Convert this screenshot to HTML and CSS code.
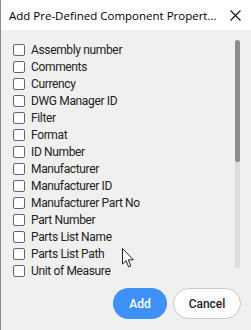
FILE: index.html
```html
<!DOCTYPE html>
<html lang="en">
<head>
  <meta charset="UTF-8">
  <title>Add Pre-Defined Component Properties</title>
  <link rel="stylesheet" href="styles.css">
</head>
<body>
  <div class="ventana">
    <div class="barra-titulo">
      <span class="titulo">Add Pre-Defined Component Propert...</span>
      <svg class="cerrar" width="11" height="11" viewBox="0 0 11 11">
        <path d="M0.5 0.5 L10.5 10.5 M10.5 0.5 L0.5 10.5" stroke="#111" stroke-width="1.1" fill="none"/>
      </svg>
    </div>

    <div class="contenido">
      <ul class="lista">
        <li><span class="caja"></span>Assembly number</li>
        <li><span class="caja"></span>Comments</li>
        <li><span class="caja"></span>Currency</li>
        <li><span class="caja"></span>DWG Manager ID</li>
        <li><span class="caja"></span>Filter</li>
        <li><span class="caja"></span>Format</li>
        <li><span class="caja"></span>ID Number</li>
        <li><span class="caja"></span>Manufacturer</li>
        <li><span class="caja"></span>Manufacturer ID</li>
        <li><span class="caja"></span>Manufacturer Part No</li>
        <li><span class="caja"></span>Part Number</li>
        <li><span class="caja"></span>Parts List Name</li>
        <li><span class="caja"></span>Parts List Path</li>
        <li><span class="caja"></span>Unit of Measure</li>
      </ul>
      <div class="scroll">
        <div class="scroll-thumb"></div>
      </div>
    </div>

    <div class="botones">
      <button class="btn-add">Add</button>
      <button class="btn-cancel">Cancel</button>
    </div>

    <!-- puntero del raton -->
    <svg class="cursor" width="13" height="21" viewBox="0 0 13 21">
      <path d="M0.5 0.5 L0.5 16 L4 12.6 L6.6 18.8 L8.8 17.9 L6.3 11.8 L11.3 11.8 Z" fill="#fff" stroke="#222" stroke-width="1"/>
    </svg>
  </div>
</body>
</html>
```

FILE: styles.css
```css
* {
  box-sizing: border-box;
}
body {
  margin: 0;
  font-family: Roboto, "Liberation Sans", sans-serif;
  background-color: #f0f0f0;
}
.ventana {
  position: relative;
  width: 251px;
  height: 330px;
  background-color: #f0f0f0;
  border-left: 1px solid #8a8a8a;
}
.barra-titulo {
  height: 30px;
  background: white;
  display: flex;
  align-items: center;
  justify-content: space-between;
  padding: 0 10px 0 8px;
}
.titulo {
  font-family: "Open Sans", "Noto Sans", sans-serif;
  font-size: 11.5px;
  color: #000;
}
.contenido {
  display: flex;
  height: 248px;
  padding-top: 10px;
}
.lista {
  list-style: none;
  margin: 0;
  padding: 1px 0 0 12px;
  flex: 1;
}
.lista li {
  display: flex;
  align-items: center;
  height: 17px;
  font-size: 12px;
  letter-spacing: -0.35px;
  color: #222;
}
.caja {
  width: 12px;
  height: 12px;
  border: 1px solid #666;
  border-radius: 2px;
  background: white;
  margin-right: 6px;
}
.scroll {
  width: 5px;
  margin-right: 11px;
  height: 228px;
  background-color: #dcdcdc;
  border-radius: 3px;
}
.scroll-thumb {
  height: 122px;
  background-color: #8c8c8c;
  border-radius: 3px;
}
.botones {
  display: flex;
  justify-content: flex-end;
  gap: 6px;
  padding: 10px 10px 0 0;
}
button {
  height: 31px;
  border-radius: 16px;
  font-family: Roboto, "Liberation Sans", sans-serif;
  font-size: 12px;
  font-weight: 500;
  cursor: pointer;
}
.btn-add {
  width: 54px;
  background-color: #3f90f7;
  color: white;
  border: none;
}
.btn-cancel {
  width: 68px;
  background: white;
  color: #222;
  border: 1px solid #c8c8c8;
}
.cursor {
  position: absolute;
  left: 121px;
  top: 248px;
}
```
